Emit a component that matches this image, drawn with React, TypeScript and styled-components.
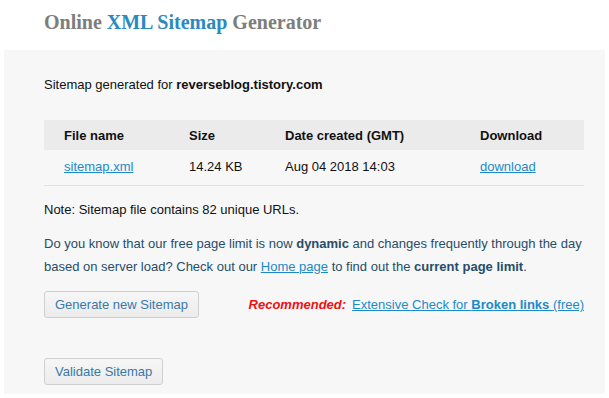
import React, { ReactElement } from 'react';
import styled, { createGlobalStyle } from 'styled-components';

const GlobalStyle = createGlobalStyle`
  body {
    margin: 0;
    background: #fff;
    font-family: "Liberation Sans", Arial, sans-serif;
  }
`;

const Page = styled.div`
  width: 609px;
  height: 398px;
  overflow: hidden;
  padding: 0 4px;
  box-sizing: border-box;
`;

const Title = styled.h1`
  margin: 0;
  padding: 11px 0 0 40px;
  height: 50px;
  box-sizing: border-box;
  font-family: "Liberation Serif", "Times New Roman", serif;
  font-size: 20px;
  font-weight: bold;
  color: #7d7d7d;
`;

const Accent = styled.span`
  color: #2a8ac0;
`;

const Panel = styled.div`
  background: #f7f7f7;
  height: 344px;
  padding: 26px 21px 0 40px;
  box-sizing: border-box;
  font-size: 13px;
  color: #111;
`;

const Intro = styled.p`
  margin: 0 0 26px;
  line-height: 18px;
`;

const Table = styled.table`
  width: 540px;
  table-layout: fixed;
  border-collapse: collapse;
  font-size: 13px;
`;

const Head = styled.th<{ $w: number }>`
  background: #ebebeb;
  height: 30px;
  padding: 0;
  width: ${(p) => p.$w}px;
  text-align: left;
  font-weight: bold;
  &:first-child {
    padding-left: 20px;
  }
`;

const Cell = styled.td`
  height: 33px;
  padding: 0 0 2px;
  border-bottom: 1px solid #e2e2e2;
  &:first-child {
    padding-left: 20px;
  }
`;

const Link = styled.a`
  color: #1c8ac8;
  text-decoration: underline;
`;

const Note = styled.p`
  margin: 15px 0 0;
  line-height: 18px;
`;

const Info = styled.p`
  margin: 13px 0 0;
  line-height: 23px;
  color: #274d68;
`;

const Actions = styled.div`
  display: flex;
  align-items: center;
  justify-content: space-between;
  margin-top: 13px;
  width: 540px;
`;

const Button = styled.button`
  height: 27px;
  padding: 0 10px;
  font-family: "Liberation Sans", Arial, sans-serif;
  font-size: 13px;
  color: #3a78a8;
  background: linear-gradient(#f6f6f6, #ececec);
  border: 1px solid #cfcfcf;
  border-radius: 3px;
`;

const Recommend = styled.div`
  display: flex;
  gap: 6px;
`;

const Red = styled.em`
  color: #ee1111;
  font-weight: bold;
`;

const Spacer = styled.div`
  height: 40px;
`;

export default function App(): ReactElement {
  return (
    <Page>
      <GlobalStyle />
      <Title>
        Online <Accent>XML Sitemap</Accent> Generator
      </Title>
      <Panel>
        <Intro>
          Sitemap generated for <b>reverseblog.tistory.com</b>
        </Intro>
        <Table>
          <thead>
            <tr>
              <Head $w={125}>File name</Head>
              <Head $w={96}>Size</Head>
              <Head $w={195}>Date created (GMT)</Head>
              <Head $w={104}>Download</Head>
            </tr>
          </thead>
          <tbody>
            <tr>
              <Cell>
                <Link href="#">sitemap.xml</Link>
              </Cell>
              <Cell>14.24 KB</Cell>
              <Cell>Aug 04 2018 14:03</Cell>
              <Cell>
                <Link href="#">download</Link>
              </Cell>
            </tr>
          </tbody>
        </Table>
        <Note>Note: Sitemap file contains 82 unique URLs.</Note>
        <Info>
          Do you know that our free page limit is now <b>dynamic</b> and changes frequently through the day
          based on server load? Check out our <Link href="#">Home page</Link> to find out the{' '}
          <b>current page limit</b>.
        </Info>
        <Actions>
          <Button>Generate new Sitemap</Button>
          <Recommend>
            <Red>Recommended:</Red>
            <Link href="#">
              Extensive Check for <b>Broken links </b>(free)
            </Link>
          </Recommend>
        </Actions>
        <Spacer />
        <Button>Validate Sitemap</Button>
      </Panel>
    </Page>
  );
}
